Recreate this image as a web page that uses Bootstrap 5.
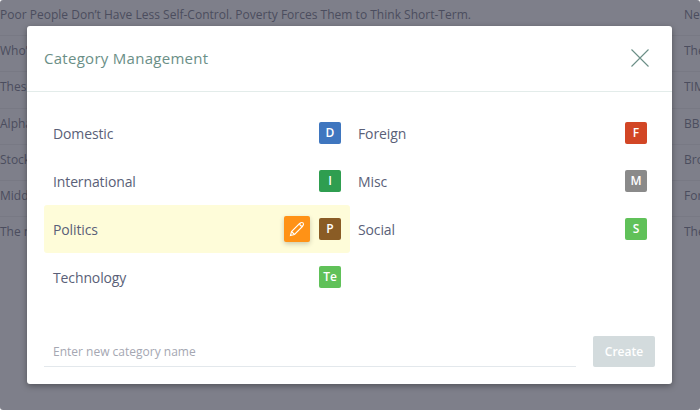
<!DOCTYPE html>
<html lang="en">
<head>
<meta charset="utf-8">
<title>Category Management</title>
<link rel="stylesheet" href="https://cdn.jsdelivr.net/npm/bootstrap@5.3.0/dist/css/bootstrap.min.css">
<style>
html, body { width: 700px; height: 410px; overflow: hidden; }
body { background: #fff; font-family: "Open Sans", sans-serif; color: #5a5f78; }
.bg-page { width: 700px; height: 410px; overflow: hidden; display: flex; background: #fff; }
.bg-left { width: 684px; flex: none; }
.bg-right { flex: 1; min-width: 0; }
.bg-row { height: 36.2px; line-height: 30px; font-size: 12px; letter-spacing: .012px; color: #7a7c8c; white-space: nowrap; overflow: hidden; border-bottom: 1px solid #eee; }
.scrim { position: absolute; inset: 0; background: rgba(46, 48, 66, .62); border-radius: 3px; }
.cat-modal { position: absolute; left: 27px; top: 26px; width: 645px; height: 358px; background: #fff; border: 0; border-radius: 3px; box-shadow: 0 2px 6px rgba(0,0,0,.35); }
.cat-head { height: 66px; padding: 0 17px 1px; border-bottom: 1px solid #e3ecea; }
.cat-title { font-size: 15px; font-weight: 400; color: #6b8f87; letter-spacing: .28px; margin: 0; }
.cat-close { width: 18px; height: 18px; padding: 0; background: none; border: 0; display: flex; margin-right: 6px; }
.cat-body { padding: 17px 17px 0; }
.cat-grid { height: 227px; align-content: flex-start; }
.cat-item { height: 48px; padding: 0 9px; font-size: 14px; letter-spacing: -.12px; color: #5a5f78; border-radius: 3px; }
.cat-col { width: 306px; flex: none; }
.cat-col-r { width: 305px; flex: none; padding-left: 8px; padding-right: 8px; }
.cat-on { background: #fefcd9; }
.cat-tag { width: 22px; height: 22px; border-radius: 2px; color: #fff; font-size: 12px; font-weight: 600; letter-spacing: 0; }
.tag-d { background: #3f76bf; }
.tag-f { background: #d24625; }
.tag-i { background: #2f9e50; }
.tag-m { background: #8a8a8a; }
.tag-p { background: #8a5c25; }
.tag-s { background: #60c159; }
.cat-edit { width: 26px; height: 26px; padding: 0; border: 0; border-radius: 2px; background: #ff9216; box-shadow: 0 2px 5px rgba(0,0,0,.2); margin-right: 9px; }
.cat-input { width: 532px; height: 31px; padding: 0 9px; background: #fff; border: 0; border-bottom: 1px solid #e3e8ec; border-radius: 0; font-size: 12px; outline: 0; color: #5a5f78; }
.cat-input::placeholder { color: #a5a7b2; opacity: 1; }
.cat-create { width: 62px; height: 31px; padding: 0; border: 0; border-radius: 2px; background: #d3dbdd; color: #fff; font-size: 12px; font-weight: 600; }
</style>
</head>
<body>
<div class="bg-page">
  <div class="bg-left">
    <div class="bg-row">Poor People Don’t Have Less Self-Control. Poverty Forces Them to Think Short-Term.</div>
    <div class="bg-row">Who’s</div>
    <div class="bg-row">These</div>
    <div class="bg-row">Alpha</div>
    <div class="bg-row">Stock</div>
    <div class="bg-row">Middle</div>
    <div class="bg-row border-0">The n</div>
  </div>
  <div class="bg-right">
    <div class="bg-row">Ne</div>
    <div class="bg-row">The</div>
    <div class="bg-row">TIM</div>
    <div class="bg-row">BB</div>
    <div class="bg-row">Bro</div>
    <div class="bg-row">For</div>
    <div class="bg-row border-0">The</div>
  </div>
</div>
<div class="scrim"></div>
<div class="modal-content cat-modal">
  <div class="modal-header cat-head d-flex justify-content-between align-items-center">
    <h5 class="cat-title">Category Management</h5>
    <button type="button" class="cat-close" aria-label="Close">
      <svg width="18" height="18" viewBox="0 0 18 18"><path d="M.5.5l17 17M17.500.5l-17 17" stroke="#6b8f87" stroke-width="1.100" fill="none"/></svg>
    </button>
  </div>
  <div class="modal-body cat-body">
    <div class="d-flex flex-wrap cat-grid">
      <div class="cat-col cat-item d-flex align-items-center justify-content-between"><span>Domestic</span><span class="cat-tag tag-d d-flex align-items-center justify-content-center">D</span></div>
      <div class="cat-col-r cat-item d-flex align-items-center justify-content-between"><span>Foreign</span><span class="cat-tag tag-f d-flex align-items-center justify-content-center">F</span></div>
      <div class="cat-col cat-item d-flex align-items-center justify-content-between"><span>International</span><span class="cat-tag tag-i d-flex align-items-center justify-content-center">I</span></div>
      <div class="cat-col-r cat-item d-flex align-items-center justify-content-between"><span>Misc</span><span class="cat-tag tag-m d-flex align-items-center justify-content-center">M</span></div>
      <div class="cat-col cat-item cat-on d-flex align-items-center"><span class="me-auto">Politics</span>
        <button type="button" class="cat-edit d-flex align-items-center justify-content-center" aria-label="Edit">
          <svg width="16" height="16" viewBox="0 0 16 16" fill="none" stroke="#fff" stroke-width="1.100"><path d="M1.500 14.500l1-4L10.500 2.500l3 3-8 8z"/><path d="M2.500 10.500l3 3"/><circle cx="12.700" cy="3.300" r="1.800" fill="#ff9216"/></svg>
        </button>
        <span class="cat-tag tag-p d-flex align-items-center justify-content-center">P</span></div>
      <div class="cat-col-r cat-item d-flex align-items-center justify-content-between"><span>Social</span><span class="cat-tag tag-s d-flex align-items-center justify-content-center">S</span></div>
      <div class="cat-col cat-item d-flex align-items-center justify-content-between"><span>Technology</span><span class="cat-tag tag-s d-flex align-items-center justify-content-center">Te</span></div>
    </div>
    <div class="d-flex justify-content-between">
      <input class="form-control cat-input" type="text" placeholder="Enter new category name">
      <button type="button" class="btn cat-create">Create</button>
    </div>
  </div>
</div>
<script src="https://cdn.jsdelivr.net/npm/bootstrap@5.3.0/dist/js/bootstrap.bundle.min.js"></script>
</body>
</html>
